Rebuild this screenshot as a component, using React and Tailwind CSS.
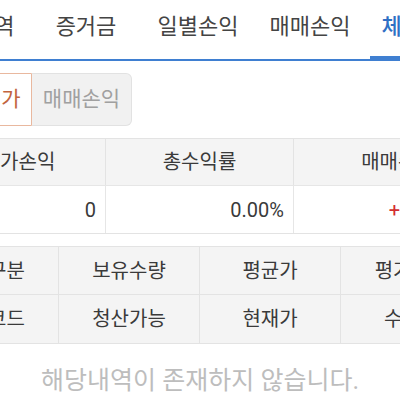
const TABS = ['주문내역', '증거금', '일별손익', '매매손익', '체결내역']

const SUMMARY = [
  { head: '평가손익', value: '0', headCls: 'pl-[14px]' },
  { head: '총수익률', value: '0.00%', headCls: '' },
  { head: '매매손익', value: '+0', headCls: 'pl-[20px]' },
]

const GRID_ROWS = [
  ['매매구분', '보유수량', '평균가', '평가손익'],
  ['종목코드', '청산가능', '현재가', '수익률'],
]

export default function App() {
  return (
    <div
      className="w-[400px] h-[400px] overflow-hidden bg-white text-[#333]"
      style={{ fontFamily: "Roboto, 'Noto Sans CJK KR', sans-serif" }}
    >
      <div className="ml-[-82px] w-[564px]">
        {/* tab bar */}
        <div className="flex h-[61px] border-b-2 border-[#3f7fd1]">
          {TABS.map((t, i) => (
            <div
              key={t}
              className={`relative w-[112px] shrink-0 flex items-start justify-center pt-[10px] text-[22px] ${
                i === 4 ? 'text-[#2f6fc4] font-medium' : 'text-[#444]'
              }`}
            >
              {t}
              {i === 4 && <span className="absolute left-[4px] right-0 bottom-[-2px] h-[5px] bg-[#3f7fd1]" />}
            </div>
          ))}
        </div>

        {/* segmented toggle */}
        <div className="flex pl-[14px] pt-[12px]">
          <button
            type="button"
            className="w-[100px] h-[53px] flex items-center justify-center text-[21px] text-[#c2643e] bg-white border border-[#e9b89f] rounded-l-[6px]"
          >
            잔고평가
          </button>
          <button
            type="button"
            className="w-[100px] h-[53px] flex items-center justify-center text-[21px] text-[#a0a0a0] bg-[#f1f1f1] border border-l-0 border-[#e2e2e2] rounded-r-[6px]"
          >
            매매손익
          </button>
        </div>

        {/* summary table */}
        <div className="mt-[12px] border-y border-[#e3e3e3]">
          <div className="grid grid-cols-3 h-[47px] bg-[#f4f4f4] border-b border-[#e6e6e6]">
            {SUMMARY.map((c, i) => (
              <div
                key={c.head}
                className={`flex items-center justify-center text-[20px] text-[#3a3a3a] ${c.headCls} ${
                  i < 2 ? 'border-r border-[#e3e3e3]' : ''
                }`}
              >
                {c.head}
              </div>
            ))}
          </div>
          <div className="grid grid-cols-3 h-[47px] bg-white">
            {SUMMARY.map((c, i) => (
              <div
                key={c.head}
                className={`flex items-center text-[20px] ${
                  i < 2 ? 'justify-end pr-[9px] border-r border-[#e6e6e6] text-[#3a3a3a]' : 'justify-center pl-[24px] text-[#d32f2f]'
                }`}
              >
                {c.value}
              </div>
            ))}
          </div>
        </div>

        {/* position grid header */}
        <div className="mt-[12px] border-y border-[#e3e3e3] bg-[#f4f4f4]">
          {GRID_ROWS.map((row, r) => (
            <div
              key={r}
              className={`grid grid-cols-4 h-[48px] ${r === 0 ? 'border-b border-[#e3e3e3]' : ''}`}
            >
              {row.map((c, i) => (
                <div
                  key={c}
                  className={`flex items-center justify-center text-[20px] text-[#3a3a3a] ${
                    i < 3 ? 'border-r border-[#e3e3e3]' : ''
                  }`}
                >
                  {c}
                </div>
              ))}
            </div>
          ))}
        </div>
      </div>

      <p className="pt-[19px] text-center text-[25px] leading-[36px] text-[#bdbdbd]">해당내역이 존재하지 않습니다.</p>
    </div>
  )
}
